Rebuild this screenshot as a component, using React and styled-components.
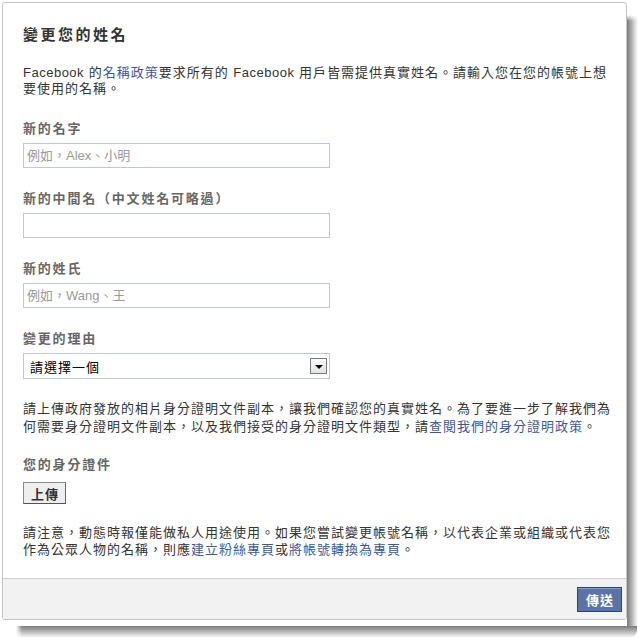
import React from 'react'
import styled, { createGlobalStyle } from 'styled-components'

const GlobalStyle = createGlobalStyle`
  body {
    margin: 0;
    background: #fff;
    font-family: "Liberation Sans", "Noto Sans CJK TC", sans-serif;
  }
`

export default function App() {
  return (
    <>
      <GlobalStyle />
      <Shell>
        <Canvas>
          <Dialog>
            <Body>
              <Heading>變更您的姓名</Heading>
              <Text $lh={16} $mt={21}>
                <Latin>Facebook</Latin> 的<Link href="#">名稱政策</Link>要求所有的 <Latin>Facebook</Latin> 用戶皆需提供真實姓名。請輸入您在您的帳號上想要使用的名稱。
              </Text>

              <Field $mt={24}>
                <Label>新的名字</Label>
                <TextInput placeholder="例如，Alex、小明" />
              </Field>
              <Field $mt={23}>
                <Label>新的中間名（中文姓名可略過）</Label>
                <TextInput />
              </Field>
              <Field $mt={23}>
                <Label>新的姓氏</Label>
                <TextInput placeholder="例如，Wang、王" />
              </Field>
              <Field $mt={23}>
                <Label>變更的理由</Label>
                <SelectBox>
                  <span>請選擇一個</span>
                  <Arrow />
                </SelectBox>
              </Field>

              <Text $lh={18} $mt={21}>
                請上傳政府發放的相片身分證明文件副本，讓我們確認您的真實姓名。為了要進一步了解我們為何需要身分證明文件副本，以及我們接受的身分證明文件類型，請<Link href="#">查閱我們的身分證明政策</Link>。
              </Text>

              <Field $mt={21}>
                <Label $mb={9}>您的身分證件</Label>
                <UploadButton>上傳</UploadButton>
              </Field>

              <Text $lh={17} $mt={20}>
                請注意，動態時報僅能做私人用途使用。如果您嘗試變更帳號名稱，以代表企業或組織或代表您作為公眾人物的名稱，則應<Link href="#">建立粉絲專頁</Link>或<Link href="#">將帳號轉換為專頁</Link>。
              </Text>
            </Body>
            <Footer>
              <SubmitButton>傳送</SubmitButton>
            </Footer>
          </Dialog>
        </Canvas>
        <RightShadow />
        <BottomShadow />
      </Shell>
    </>
  )
}

const Shell = styled.div`
  display: grid;
  grid-template-columns: 627px 10px;
  grid-template-rows: 626px 11px;
`

const Canvas = styled.div`
  padding: 2px 0 0 2px;
  background: #fff;
  box-sizing: border-box;
`

const RightShadow = styled.div`
  margin-top: 15px;
  background: linear-gradient(to right, #7b7b7b, #a9a9a9 40%, #dcdcdc 80%, #f3f3f3);
  -webkit-mask-image: linear-gradient(to bottom, transparent, #000 6px);
  mask-image: linear-gradient(to bottom, transparent, #000 6px);
`

const BottomShadow = styled.div`
  grid-column: 1 / 3;
  margin-left: 16px;
  background: linear-gradient(to bottom, #7b7b7b, #a9a9a9 40%, #dcdcdc 80%, #f3f3f3);
  -webkit-mask-image: linear-gradient(to right, transparent, #000 6px);
  mask-image: linear-gradient(to right, transparent, #000 6px);
  border-bottom-right-radius: 6px;
`

const Dialog = styled.div`
  width: 625px;
  height: 618px;
  box-sizing: border-box;
  border: 1px solid #c4c4c4;
  border-radius: 3px;
  display: flex;
  flex-direction: column;
  overflow: hidden;
  background: #fff;
`

const Body = styled.div`
  flex: 1;
  padding: 22px 14px 0 20px;
  color: #333;
`

const Heading = styled.h2`
  margin: 0;
  font-size: 15px;
  line-height: 19px;
  font-weight: bold;
  letter-spacing: 2.5px;
  color: #333;
`

const Text = styled.p`
  margin: ${p => p.$mt}px 0 0;
  font-size: 13px;
  letter-spacing: 1px;
  line-height: ${p => p.$lh}px;
  color: #333;
`

const Latin = styled.span`
  letter-spacing: 0.5px;
`

const Link = styled.a`
  color: #3b5998;
  text-decoration: none;
`

const Field = styled.div`
  margin-top: ${p => p.$mt}px;
`

const Label = styled.div`
  font-size: 13px;
  font-weight: bold;
  letter-spacing: 1.8px;
  line-height: 16px;
  color: #666;
  margin-bottom: ${p => p.$mb ?? 6}px;
`

const TextInput = styled.input`
  display: block;
  width: 307px;
  height: 25px;
  box-sizing: border-box;
  margin: 0;
  padding: 3px 3px;
  border: 1px solid #bdc7d8;
  font-family: "Liberation Sans", "Noto Sans CJK TC", sans-serif;
  font-size: 13px;
  color: #333;
  outline: none;

  &::placeholder {
    color: #999;
  }
`

const SelectBox = styled.div`
  width: 307px;
  height: 26px;
  box-sizing: border-box;
  border: 1px solid #bdc7d8;
  padding: 0 2px 0 6px;
  display: flex;
  align-items: center;
  justify-content: space-between;
  font-size: 13px;
  letter-spacing: 1px;
  color: #000;
`

const Arrow = styled.span`
  width: 17px;
  height: 16px;
  box-sizing: border-box;
  border: 1px solid #7a7a7a;
  background: linear-gradient(#fdfdfd, #e2e2e2);
  display: flex;
  align-items: center;
  justify-content: center;

  &::after {
    content: "";
    border-left: 4px solid transparent;
    border-right: 4px solid transparent;
    border-top: 4px solid #000;
    margin-top: 1px;
  }
`

const UploadButton = styled.button`
  display: block;
  height: 22px;
  margin: 0;
  padding: 0 6px 0 7px;
  box-sizing: border-box;
  border: 1px solid #888;
  border-bottom-color: #555;
  border-right-color: #666;
  background: #eee;
  font-family: "Liberation Sans", "Noto Sans CJK TC", sans-serif;
  font-size: 13px;
  font-weight: bold;
  letter-spacing: 1px;
  color: #333;
`

const Footer = styled.div`
  border-top: 1px solid #ccc;
  background: #f2f2f2;
  padding: 8px 4px 7px;
  display: flex;
  justify-content: flex-end;
`

const SubmitButton = styled.button`
  height: 25px;
  margin: 0;
  padding: 0 7px 0 8px;
  box-sizing: border-box;
  border: 1px solid #29447e;
  background: #5b74a8;
  box-shadow: inset 0 1px 0 #8a9cc2;
  font-family: "Liberation Sans", "Noto Sans CJK TC", sans-serif;
  font-size: 13px;
  font-weight: bold;
  letter-spacing: 1px;
  color: #fff;
`
